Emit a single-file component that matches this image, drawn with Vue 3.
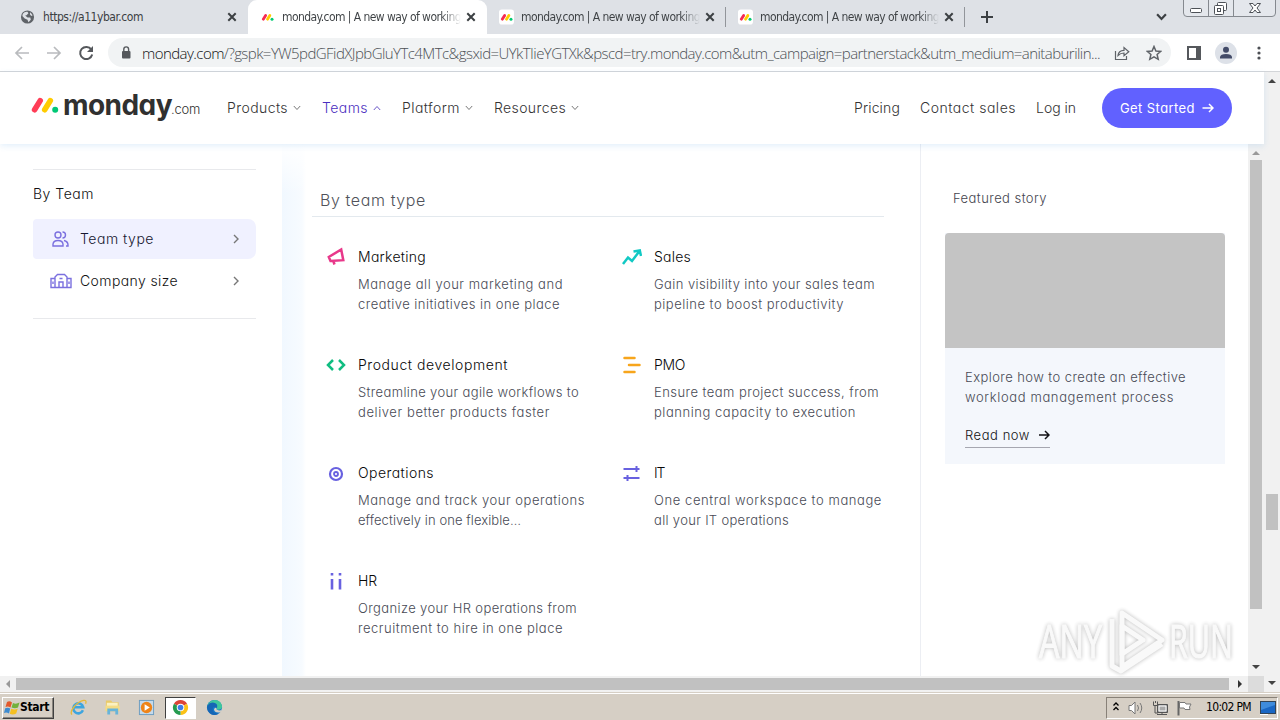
<script setup>
const tabs = [
  { title: 'https://a11ybar.com', width: 100, globe: true, active: false },
  { title: 'monday.com | A new way of working', width: 179, active: true },
  { title: 'monday.com | A new way of working', width: 179, active: false },
  { title: 'monday.com | A new way of working', width: 179, active: false },
]

const menu = [
  { label: 'Products', width: 61 },
  { label: 'Teams', width: 46, open: true },
  { label: 'Platform', width: 58 },
  { label: 'Resources', width: 72 },
]

const links = [
  { label: 'Pricing', width: 46 },
  { label: 'Contact sales', width: 96 },
  { label: 'Log in', width: 40 },
]

const teams = [
  { icon: 'marketing', title: 'Marketing', width: 68, lines: [['Manage all your marketing and', 205], ['creative initiatives in one place', 202]] },
  { icon: 'sales', title: 'Sales', width: 37, lines: [['Gain visibility into your sales team', 221], ['pipeline to boost productivity', 190]] },
  { icon: 'product', title: 'Product development', width: 150, lines: [['Streamline your agile workflows to', 221], ['deliver better products faster', 192]] },
  { icon: 'pmo', title: 'PMO', width: 31, lines: [['Ensure team project success, from', 225], ['planning capacity to execution', 202]] },
  { icon: 'operations', title: 'Operations', width: 76, lines: [['Manage and track your operations', 227], ['effectively in one flexible…', 163]] },
  { icon: 'it', title: 'IT', width: 10, lines: [['One central workspace to manage', 228], ['all your IT operations', 135]] },
  { icon: 'hr', title: 'HR', width: 19, lines: [['Organize your HR operations from', 219], ['recruitment to hire in one place', 205]] },
]

// spreads the letters so that the text takes the given width
const vFit = {
  mounted(el, { value }) {
    const range = document.createRange()
    range.selectNodeContents(el)
    const width = range.getBoundingClientRect().width
    const count = el.textContent.length
    el.style.letterSpacing = `${(value - width) / count}px`
  },
}
</script>

<template>
  <div class="screen">
    <div class="tab-strip">
      <div v-for="(tab, i) in tabs" :key="i" class="tab" :class="{ active: tab.active, first: i === 0, divided: i > 1 }">
        <svg v-if="tab.globe" class="favicon globe" viewBox="0 0 16 16">
          <circle cx="8" cy="8" r="7" fill="#5f6368" />
          <path d="M3 4.500Q5 2 8 2.500L9 4 7 6 5.500 6.500 8 8.500H11L11.500 11 9 13.500 8 11 5 9.500 2.500 7Z" fill="#dee1e6" />
          <path d="M11 3L13.500 6 12 7 10.500 5Z" fill="#dee1e6" />
        </svg>
        <svg v-else class="favicon" viewBox="0 0 16 16">
          <rect width="16" height="16" rx="3" fill="#fff" />
          <g fill="none" stroke-width="3" stroke-linecap="round">
            <path d="M3.500 10.300L6 6.300" stroke="#f62b54" />
            <path d="M8 10.300L10.500 6.300" stroke="#fc0" />
          </g>
          <circle cx="12.800" cy="10.400" r="1.600" fill="#00ca72" />
        </svg>
        <div class="tab-title"><span v-fit="tab.width" :class="{ faded: !tab.globe }">{{ tab.title }}</span></div>
        <svg class="tab-close" viewBox="0 0 10 10"><path d="M1.300 1.300L8.700 8.700M8.700 1.300L1.300 8.700" /></svg>
      </div>
      <svg class="new-tab" viewBox="0 0 12 12"><path d="M6 0V12M0 6H12" /></svg>
      <svg class="tab-search" viewBox="0 0 10 7"><path d="M1 1L5 5.300 9 1" /></svg>
      <svg class="window-buttons" viewBox="0 0 94 18">
        <path d="M.5 0V13Q.5 16.500 4 16.500H89Q92.500 16.500 92.500 13V0M25.500 0V16M50.500 0V16" fill="#e4e7ec" stroke="#85898f" />
        <g fill="#fff" stroke="#4d5157">
          <rect x="7.500" y="8.500" width="11" height="4" rx="1" />
          <rect x="34.500" y="2.500" width="9" height="8" rx="1" />
          <rect x="31.500" y="5.500" width="9" height="9" rx="1" />
          <rect x="34.500" y="8.500" width="3" height="3" />
          <path d="M66.500 3.500H70L72 6 74 3.500H77.500L74 8 77.500 12.500H74L72 10 70 12.500H66.500L70 8Z" />
        </g>
      </svg>
    </div>

    <div class="toolbar">
      <svg class="nav-icon" viewBox="0 0 16 16"><path d="M15 8H2M8 2L2 8 8 14" stroke="#b9bbbe" /></svg>
      <svg class="nav-icon" viewBox="0 0 16 16"><path d="M1 8H14M8 2L14 8 8 14" stroke="#b9bbbe" /></svg>
      <svg class="nav-icon" viewBox="0 0 16 16">
        <path d="M13.300 4.500A6.100 6.100 0 1 0 14.200 9.500" stroke="#55585c" stroke-width="2" />
        <path d="M15 1V7H9Z" fill="#55585c" />
      </svg>
      <div class="address">
        <svg class="lock" viewBox="0 0 10 13">
          <rect x="1" y="5" width="8.500" height="7.500" rx="1" fill="#55585c" />
          <path d="M2.800 5V3.300A2.400 2.400 0 0 1 7.600 3.300V5" fill="none" stroke="#55585c" stroke-width="1.400" />
        </svg>
        <span v-fit="958" class="url"><b>monday.com</b>/?gspk=YW5pdGFidXJpbGluYTc4MTc&amp;gsxid=UYkTIieYGTXk&amp;pscd=try.monday.com&amp;utm_campaign=partnerstack&amp;utm_medium=anitaburilin...</span>
        <svg class="share" viewBox="0 0 16 16">
          <path d="M1.500 6V14.500H12.500V11" />
          <path d="M4 10.500Q4.500 5.500 10 5.300V2.500L14.800 6.700 10 10.800V8Q6.500 8 4 10.500Z" />
        </svg>
        <svg class="star" viewBox="0 0 16 16"><path d="M8 1.500L9.900 6 14.800 6.400 11.100 9.500 12.200 14.300 8 11.800 3.800 14.300 4.900 9.500 1.200 6.400 6.100 6Z" /></svg>
      </div>
      <svg class="side-panel" viewBox="0 0 14 14"><path d="M1 1H13V13H1Z" fill="none" stroke="#55585c" stroke-width="2" /><rect x="9" width="5" height="14" fill="#55585c" /></svg>
      <svg class="profile" viewBox="0 0 22 22">
        <circle cx="11" cy="11" r="11" fill="#dde1e8" />
        <circle cx="11" cy="7.800" r="3" fill="#434b68" />
        <path d="M5 16.500V15Q5.500 12 11 12T17 15V16.500Z" fill="#434b68" />
      </svg>
      <svg class="kebab" viewBox="0 0 4 14"><circle cx="2" cy="2" r="1.600" /><circle cx="2" cy="7" r="1.600" /><circle cx="2" cy="12" r="1.600" /></svg>
    </div>

    <div class="viewport">
      <div class="page">
        <header class="site-header">
          <div class="logo">
            <svg class="logo-mark" viewBox="0 0 28 18">
              <g fill="none" stroke-width="5.600" stroke-linecap="round">
                <path d="M3.600 12.700L9.200 3.600" stroke="#ff3d57" />
                <path d="M13.700 12.700L19.300 3.600" stroke="#fc0" />
              </g>
              <circle cx="24.200" cy="12.800" r="3" fill="#00c875" />
            </svg>
            <span v-fit="109" class="logo-name">monday</span>
            <span v-fit="29" class="logo-com">.com</span>
          </div>
          <nav class="menu">
            <a v-for="m in menu" :key="m.label" :class="{ open: m.open }">
              <span v-fit="m.width">{{ m.label }}</span>
              <svg viewBox="0 0 8 6"><path :d="m.open ? 'M.8 5L4 1.500 7.200 5' : 'M.8 1L4 4.500 7.200 1'" /></svg>
            </a>
          </nav>
          <nav class="links">
            <a v-for="l in links" :key="l.label"><span v-fit="l.width">{{ l.label }}</span></a>
          </nav>
          <button class="cta">
            <span v-fit="75">Get Started</span>
            <svg viewBox="0 0 12 10"><path d="M.5 5H11M7 1L11 5 7 9" /></svg>
          </button>
        </header>

        <div class="mega">
          <aside class="side">
            <div class="side-box">
              <h3><span v-fit="61">By Team</span></h3>
              <div class="side-item selected">
                <svg viewBox="0 0 22 18">
                  <circle cx="8" cy="5" r="3" />
                  <path d="M3 16V14Q3.500 10.500 8 10.500T13 14V16ZM12.500 2A3 3 0 0 1 12.500 8M14 10.500Q18 11.500 18 15V16H16" />
                </svg>
                <span v-fit="74">Team type</span>
                <svg class="chev" viewBox="0 0 6 10"><path d="M1 1L5 5 1 9" /></svg>
              </div>
              <div class="side-item">
                <svg viewBox="0 0 22 18">
                  <path d="M5 15.500V5L7.500 2.500H14.500L17 5V15.500M5 6.500H1V15.500H21V6.500H17M9 15.500V10H13V15.500M9.500 6.500H12.500M3 9.500V12M19 9.500V12" />
                </svg>
                <span v-fit="98">Company size</span>
                <svg class="chev" viewBox="0 0 6 10"><path d="M1 1L5 5 1 9" /></svg>
              </div>
            </div>
          </aside>

          <section class="main">
            <h2><span v-fit="106">By team type</span></h2>
            <div class="grid">
              <div v-for="t in teams" :key="t.title" class="team">
                <svg class="team-icon" viewBox="0 0 20 20">
                  <path v-if="t.icon === 'marketing'" d="M15.200 2.500L17.300 13.200 4.500 14 2.800 10ZM7.500 14.500L8.500 17.500" stroke="#e8388a" />
                  <path v-else-if="t.icon === 'sales'" d="M1 17L6 10.500 10 14 17.500 4M11.500 4.500L17.800 3.500 19 9" stroke="#11c9c4" />
                  <path v-else-if="t.icon === 'product'" d="M7 5L2 10 7 15M13 5L18 10 13 15" stroke="#10bd81" />
                  <path v-else-if="t.icon === 'pmo'" d="M2.500 3H12.500M7 10H17.500M2.500 17H12.500" stroke="#f7a51c" stroke-linecap="round" />
                  <g v-else-if="t.icon === 'operations'" stroke="#6861e0" stroke-width="2.200"><circle cx="10" cy="11" r="6" /><circle cx="10" cy="11" r="2" stroke-width="1.800" /></g>
                  <path v-else-if="t.icon === 'it'" d="M1.500 6H17.500M14.500 3V9M1.500 15H17.500M5.500 12V18" stroke="#6861e0" stroke-width="2" />
                  <path v-else d="M6 2V4.500M14 2V4.500M6 8V18.500M14 8V18.500" stroke="#6861e0" stroke-width="2.600" />
                </svg>
                <div class="team-text">
                  <h4><span v-fit="t.width">{{ t.title }}</span></h4>
                  <p v-for="line in t.lines" :key="line[0]"><span v-fit="line[1]">{{ line[0] }}</span></p>
                </div>
              </div>
            </div>
          </section>

          <aside class="story">
            <h3><span v-fit="94">Featured story</span></h3>
            <div class="story-card">
              <div class="story-image"></div>
              <div class="story-body">
                <p><span v-fit="221">Explore how to create an effective</span></p>
                <p><span v-fit="209">workload management process</span></p>
                <a class="read-now">
                  <span v-fit="65">Read now</span>
                  <svg viewBox="0 0 12 10"><path d="M1 5H11M7 1L11 5 7 9" /></svg>
                </a>
              </div>
            </div>
          </aside>

          <div class="scroll-y inner">
            <svg viewBox="0 0 8 4"><path d="M0 4L4 0 8 4Z" fill="#999" /></svg>
            <div class="thumb"></div>
            <svg viewBox="0 0 8 4"><path d="M0 0L4 4 8 0Z" /></svg>
          </div>
        </div>

        <div class="scroll-x">
          <svg viewBox="0 0 4 8"><path d="M4 0L0 4 4 8Z" fill="#999" /></svg>
          <div class="thumb"></div>
          <svg viewBox="0 0 4 8"><path d="M0 0L4 4 0 8Z" /></svg>
          <div class="corner"></div>
        </div>
      </div>

      <div class="scroll-y outer">
        <svg viewBox="0 0 8 4"><path d="M0 4L4 0 8 4Z" /></svg>
        <div class="thumb"></div>
        <svg viewBox="0 0 8 4"><path d="M0 0L4 4 8 0Z" /></svg>
      </div>
    </div>

    <div class="taskbar">
      <div class="start">
        <svg viewBox="0 0 16 16">
          <path d="M3 2Q5.500 .5 8 2.500L6.500 7.500Q4 6 1.500 7Z" fill="#e2592b" />
          <path d="M9 3Q12 4.500 15.500 2.500L14 7.500Q11 9 7.500 7.500Z" fill="#73b13c" />
          <path d="M1.200 8.200Q4 7 6.200 8.500L5 13.500Q2.500 12 0 13Z" fill="#3d8bd0" />
          <path d="M7.200 8.700Q10.500 10.200 13.700 8.700L12.200 13.500Q9 15.500 5.800 13.800Z" fill="#f5c021" />
        </svg>
        <span v-fit="29">Start</span>
      </div>
      <div class="task">
        <svg viewBox="0 0 18 18">
          <path d="M13.700 12A5.300 5.300 0 1 1 14 8.700H4.500" fill="none" stroke="#3da5df" stroke-width="2.700" />
          <path d="M2 16.500C-1 13 7 3 14.500 1.500Q18 1 16.500 5" fill="none" stroke="#e6b939" stroke-width="1.400" />
        </svg>
      </div>
      <div class="task">
        <svg viewBox="0 0 18 18">
          <path d="M2 1.500H7.500L9 3.500H15.500V13H2Z" fill="#e9ca68" />
          <path d="M3 4H14.500V9H3Z" fill="#fbf1c0" />
          <path d="M1.500 7H16.500V12.500H1.500Z" fill="#f4dc85" />
          <path d="M3.500 16.500V10H15V16.500H12V13H6.500V16.500Z" fill="#68b4d9" />
        </svg>
      </div>
      <div class="task">
        <svg viewBox="0 0 18 18">
          <rect x="1.500" y="1.500" width="15" height="15" fill="#c5daeb" stroke="#6a9cc0" />
          <circle cx="9" cy="9" r="6" fill="#ef8418" />
          <path d="M7 5.500L12.500 9 7 12.500Z" fill="#fff" />
        </svg>
      </div>
      <div class="task pressed">
        <svg viewBox="0 0 18 18">
          <path d="M9 9L2.070 5A8 8 0 0 1 15.930 5Z" fill="#dc4437" />
          <path d="M9 9L15.930 5A8 8 0 0 1 9 17Z" fill="#fbc116" />
          <path d="M9 9L9 17A8 8 0 0 1 2.070 5Z" fill="#259b50" />
          <circle cx="9" cy="9" r="4" fill="#fff" /><circle cx="9" cy="9" r="3" fill="#3e7de8" />
        </svg>
      </div>
      <div class="task">
        <svg viewBox="0 0 18 18">
          <circle cx="9" cy="9" r="8" fill="#1679c9" />
          <path d="M1.200 8Q3 1 9.500 1T17 8Q17 11.500 12.500 11.500 10.800 11 11.300 9.500 11 5.500 6.500 5.500 3 5.500 1.200 8Z" fill="#3fc79c" />
          <path d="M1.500 7Q4 3 8.500 4T11.500 9.500Q7 7 7 11 7.500 15 13 15.500 8 18.500 4 15T1.500 7Z" fill="#1666b5" />
          <path d="M11 9.500Q10.500 11.500 13 12T17 10.500L15.500 14Q9 15 8.500 11.500Q9 8.500 11 9.500Z" fill="#d6cfc5" />
        </svg>
      </div>
      <div class="tray">
        <svg class="tray-up" viewBox="0 0 6 9"><path d="M.5 3.500L3 1 5.500 3.500M.5 8L3 5.500 5.500 8" /></svg>
        <svg class="tray-icon" viewBox="0 0 16 16">
          <path d="M1 5.500H3.500L7 2V14L3.500 10.500H1Z" fill="#fff" stroke="#777" />
          <path d="M9.500 5Q11.500 8 9.500 11M12 3Q15.500 8 12 13" fill="none" stroke="#777" />
        </svg>
        <svg class="tray-icon net" viewBox="0 0 16 16">
          <path d="M5.500 4.500H15.500V12.500H5.500Z" fill="#999" stroke="#555" />
          <path d="M5 14.500H15M10 12V14M3 6V13H6M1.500 1.500V5.500H5.500V1.500M3.500 1V3" fill="none" stroke="#555" />
          <path d="M7 6H14V11H7Z" fill="#aaa" stroke="#fff" />
        </svg>
        <svg class="tray-icon flag" viewBox="0 0 16 16">
          <path d="M2.500 1V15.500" stroke="#666" stroke-width="2" />
          <path d="M3.500 2.500H9L10 4H15L13.500 7 14 9.500H9L8 8H3.500Z" fill="#fff" stroke="#777" />
        </svg>
        <span v-fit="45" class="clock">10:02 PM</span>
        <svg class="desktop" viewBox="0 0 16 14">
          <rect x=".5" y=".5" width="15" height="12" fill="#1a67c4" stroke="#345" />
          <path d="M1 1H15V4L1 9Z" fill="#3f8cdc" />
          <path d="M0 13.500H8" stroke="#fff" />
        </svg>
      </div>
    </div>

    <svg class="watermark" viewBox="0 0 210 72">
      <g class="mark-text">
        <text x="9" y="52" textLength="63" lengthAdjust="spacingAndGlyphs">ANY</text>
        <text x="139" y="52" textLength="64" lengthAdjust="spacingAndGlyphs">RUN</text>
      </g>
      <g class="mark-logo">
        <path d="M92 7L132 34 92 61Z" />
        <path d="M82 13V60L91 65 132 38" />
        <path d="M92 20L113 34 92 48Z" />
      </g>
    </svg>
  </div>
</template>

<style>
body {
  margin: 0;
  overflow: hidden;
}
</style>

<style scoped>
.screen {
  position: relative;
  display: flex;
  flex-direction: column;
  width: 1280px;
  height: 720px;
  overflow: hidden;
  background: #fff;
  font-family: Inter, sans-serif;
  font-feature-settings: 'cv11';
  font-weight: 300;
  white-space: nowrap;
}

.screen * {
  box-sizing: border-box;
}

svg {
  display: block;
  flex: none;
}

h2, h3, h4, p {
  margin: 0;
  font-weight: inherit;
}

/* browser */
.tab-strip {
  display: flex;
  height: 34px;
  background: #dee1e6;
}

.tab {
  display: flex;
  align-items: center;
  width: 239px;
  padding-left: 12px;
  color: #3c4043;
  font: 12px 'DejaVu Sans Condensed', 'DejaVu Sans', sans-serif;
}

.tab.first {
  width: 248px;
  padding-left: 20px;
}

.tab.active {
  background: #fff;
  border-radius: 9px 9px 0 0;
}

.tab.divided {
  border-right: 1px solid #92959a;
  border-image: linear-gradient(transparent 23%, #92959a 23%, #92959a 78%, transparent 78%) 1;
}

.favicon {
  width: 15px;
  height: 16px;
}

.tab-title {
  flex: none;
  width: 180px;
  margin-left: 7px;
}

.faded {
  background: linear-gradient(90deg, #3c4043 89%, transparent 100%);
  -webkit-background-clip: text;
  background-clip: text;
  color: transparent;
}

.tab-close {
  width: 10px;
  height: 10px;
  margin-left: 4px;
}

.first .tab-title {
  margin-left: 8px;
}

.tab-close path, .new-tab path, .tab-search path {
  fill: none;
  stroke: #3c4043;
  stroke-width: 2;
}

.new-tab {
  width: 12px;
  height: 12px;
  margin: 11px 0 0 16px;
}

.tab-search {
  width: 11px;
  height: 8px;
  margin: 13px 0 0 163px;
}

.window-buttons {
  width: 94px;
  height: 18px;
  margin-left: 16px;
}

.toolbar {
  display: flex;
  align-items: center;
  height: 38px;
  padding-left: 14px;
  border-bottom: 1px solid #d3d5d8;
}

.nav-icon {
  width: 16px;
  height: 16px;
  margin-right: 16px;
  fill: none;
  stroke-width: 1.700;
}

.address {
  display: flex;
  align-items: center;
  width: 1063px;
  height: 29px;
  margin-left: -2px;
  padding-left: 13px;
  border-radius: 15px;
  background: #f1f3f4;
}

.lock {
  width: 10px;
  height: 13px;
  margin-right: 11px;
}

.url {
  width: 958px;
  color: #4c5055;
  font: 300 15px 'Open Sans', sans-serif;
}

.url b {
  color: #101113;
  font-weight: inherit;
}

.share, .star {
  width: 16px;
  height: 16px;
  margin-left: 14px;
  fill: none;
  stroke: #5f6368;
  stroke-width: 1.200;
}

.star {
  margin-left: 16px;
  stroke-width: 1.500;
}

.side-panel {
  width: 14px;
  height: 14px;
  margin-left: 16px;
}

.profile {
  width: 22px;
  height: 22px;
  margin-left: 14px;
}

.kebab {
  width: 4px;
  height: 14px;
  margin-left: 20px;
  fill: #4c4f54;
}

/* site header */
.viewport {
  display: flex;
  height: 620px;
}

.page {
  width: 1264px;
}

.site-header {
  position: relative;
  z-index: 1;
  display: flex;
  align-items: center;
  height: 72px;
  padding-left: 31px;
  background: #fff;
  box-shadow: 0 2px 6px rgba(80, 160, 235, 0.16);
  color: #333;
  font-size: 14px;
}

.logo {
  display: flex;
  align-items: center;
  width: 196px;
  color: #303030;
}

.logo-mark {
  width: 28px;
  height: 18px;
  margin: -4px 4px 0 0;
}

.logo-name {
  width: 108px;
  margin-top: -6px;
  font-size: 28px;
  font-weight: 700;
  line-height: 32px;
}

.logo-com {
  margin-top: 2px;
  font-size: 13px;
}

.menu {
  display: flex;
  width: 627px;
  gap: 21px;
}

.menu span, .links span {
  margin-top: -2px;
}

.menu a {
  display: flex;
  align-items: center;
  gap: 5px;
}

.menu svg {
  width: 8px;
  height: 6px;
  fill: none;
  stroke: #777;
}

.menu .open {
  color: #4b2fc0;
}

.menu .open svg {
  stroke: #6b58c8;
}

.links {
  display: flex;
  width: 248px;
  gap: 20px;
}

.links a {
  display: flex;
}

.cta {
  display: flex;
  align-items: center;
  justify-content: center;
  gap: 7px;
  width: 130px;
  height: 40px;
  padding: 0;
  border: 0;
  border-radius: 20px;
  background: #6161ff;
  color: #fff;
  font: 13px Inter, sans-serif;
  font-feature-settings: 'cv11';
}

.cta svg, .read-now svg {
  width: 12px;
  height: 10px;
  fill: none;
  stroke: currentColor;
  stroke-width: 1.500;
}

/* mega menu */
.mega {
  display: flex;
  height: 532px;
}

.side {
  width: 282px;
  padding: 25px 26px 0 33px;
}

.side-box {
  height: 150px;
  border-top: 1px solid #e8e9ec;
  border-bottom: 1px solid #e8e9ec;
  color: #111;
  font-size: 14px;
}

.side-box h3 {
  height: 49px;
  font-size: 14px;
  line-height: 47px;
}

.side-item {
  display: flex;
  align-items: center;
  height: 40px;
  margin-bottom: 2px;
  padding: 0 17px 0 17px;
  border-radius: 4px 8px 8px 4px;
}

.side-item.selected {
  background: #f0f1ff;
  color: #16172f;
}

.side-item span {
  margin-top: -2px;
}

.side-item svg {
  width: 22px;
  height: 18px;
  margin-right: 8px;
  fill: none;
  stroke: #7b70df;
  stroke-width: 1.400;
}

.side-item .chev {
  width: 6px;
  height: 10px;
  margin: 0 0 0 auto;
  stroke: #777;
}

.main {
  width: 638px;
  padding: 42px 36px 0 30px;
  background:
    linear-gradient(#fff, transparent 50px),
    linear-gradient(90deg, #f1f8ff 0, #f7fbff 20px, #fff 24px);
}

.main h2 {
  height: 31px;
  padding-left: 8px;
  border-bottom: 1px solid #e3e9ee;
  color: #50525a;
  font-size: 16px;
  line-height: 29px;
}

.grid {
  display: grid;
  grid-template-columns: 296px 276px;
  grid-auto-rows: 108px;
  padding-top: 28px;
}

.team {
  display: flex;
  padding-left: 14px;
}

.team-icon {
  width: 20px;
  height: 20px;
  margin: 2px 12px 0 0;
  fill: none;
  stroke-width: 2.500;
}

.team-text h4 {
  height: 29px;
  color: #080808;
  font-size: 14px;
  line-height: 24px;
}

.team-text p, .story-body p {
  color: #484a55;
  font-size: 13px;
  line-height: 20px;
}

.story {
  width: 328px;
  padding-left: 24px;
  border-left: 1px solid #eceef3;
}

.story h3 {
  height: 89px;
  padding: 44px 0 0 8px;
  color: #44454e;
  font-size: 13px;
  line-height: 20px;
}

.story-card {
  width: 280px;
  height: 231px;
  background: #f4f7fc;
}

.story-image {
  height: 115px;
  border-radius: 4px 4px 0 0;
  background: #c4c4c4;
}

.story-body {
  padding: 19px 0 0 20px;
}

.read-now {
  display: flex;
  align-items: center;
  gap: 8px;
  width: 85px;
  height: 25px;
  margin-top: 16px;
  border-bottom: 1px solid #a6a7b0;
  color: #121215;
  font-size: 13px;
}

/* scrollbars */
.scroll-y {
  display: flex;
  flex-direction: column;
  align-items: center;
  width: 16px;
  background: #f1f1f1;
}

.scroll-y svg {
  width: 8px;
  height: 4px;
  fill: #444;
}

.thumb {
  background: #c1c1c1;
}

.scroll-y .thumb {
  width: 12px;
}

.inner {
  padding-top: 7px;
}

.inner .thumb {
  height: 449px;
  margin: 5px 0 56px;
}

.outer {
  padding-top: 7px;
}

.outer .thumb {
  height: 36px;
  margin: 411px 0 151px;
}

.scroll-x {
  display: flex;
  align-items: center;
  height: 16px;
  padding-left: 6px;
  background: #f1f1f1;
}

.scroll-x svg {
  width: 4px;
  height: 8px;
  fill: #333;
}

.scroll-x .thumb {
  width: 1213px;
  height: 12px;
  margin: 0 9px 0 6px;
}

.corner {
  width: 16px;
  height: 16px;
  margin-left: auto;
  background: #dcdcdc;
}

/* taskbar */
.taskbar {
  display: flex;
  align-items: center;
  height: 28px;
  padding: 2px 2px 0;
  border-top: 1px solid #d6cfc5;
  box-shadow: inset 0 1px #fff;
  background: #d6cfc5;
  color: #000;
  font: 12px 'DejaVu Sans Condensed', 'DejaVu Sans', sans-serif;
}

.start {
  display: flex;
  align-items: center;
  width: 52px;
  height: 22px;
  margin-right: 9px;
  padding-left: 1px;
  border: 1px solid;
  border-color: #fff #404040 #404040 #fff;
  box-shadow: inset -1px -1px #8a857e;
  font-weight: 700;
}

.start svg {
  width: 16px;
  height: 16px;
}

.start span, .clock {
  margin-top: -2px;
}

.task {
  display: flex;
  align-items: center;
  justify-content: center;
  width: 31px;
  height: 22px;
  margin-right: 3px;
}

.task svg {
  width: 17px;
  height: 17px;
}

.task.pressed {
  border: 1px solid;
  border-color: #404040 #fff #fff #404040;
  background: #fff;
}

.tray {
  display: flex;
  align-items: center;
  width: 172px;
  height: 22px;
  margin-left: auto;
  padding-left: 6px;
  border: 1px solid;
  border-color: #888178 #fff #fff #888178;
}

.tray-up {
  width: 6px;
  height: 9px;
  margin: -2px 9px 0 0;
  fill: none;
  stroke: #000;
  stroke-width: 1.300;
}

.tray-icon {
  width: 16px;
  height: 16px;
  margin-right: 8px;
}

.clock {
  width: 46px;
  margin-left: 6px;
  margin-right: 8px;
}

.desktop {
  width: 16px;
  height: 14px;
}

.watermark {
  position: absolute;
  left: 1030px;
  top: 606px;
  width: 210px;
  height: 72px;
  filter: drop-shadow(0 0 2px rgba(0, 0, 0, 0.35));
  opacity: 0.8;
}

.mark-text {
  fill: #f8f8f8;
  stroke: #f8f8f8;
  font: 400 45px 'Open Sans', sans-serif;
}

.mark-logo {
  fill: none;
  stroke: #f8f8f8;
  stroke-width: 5;
  stroke-linejoin: round;
}
</style>
